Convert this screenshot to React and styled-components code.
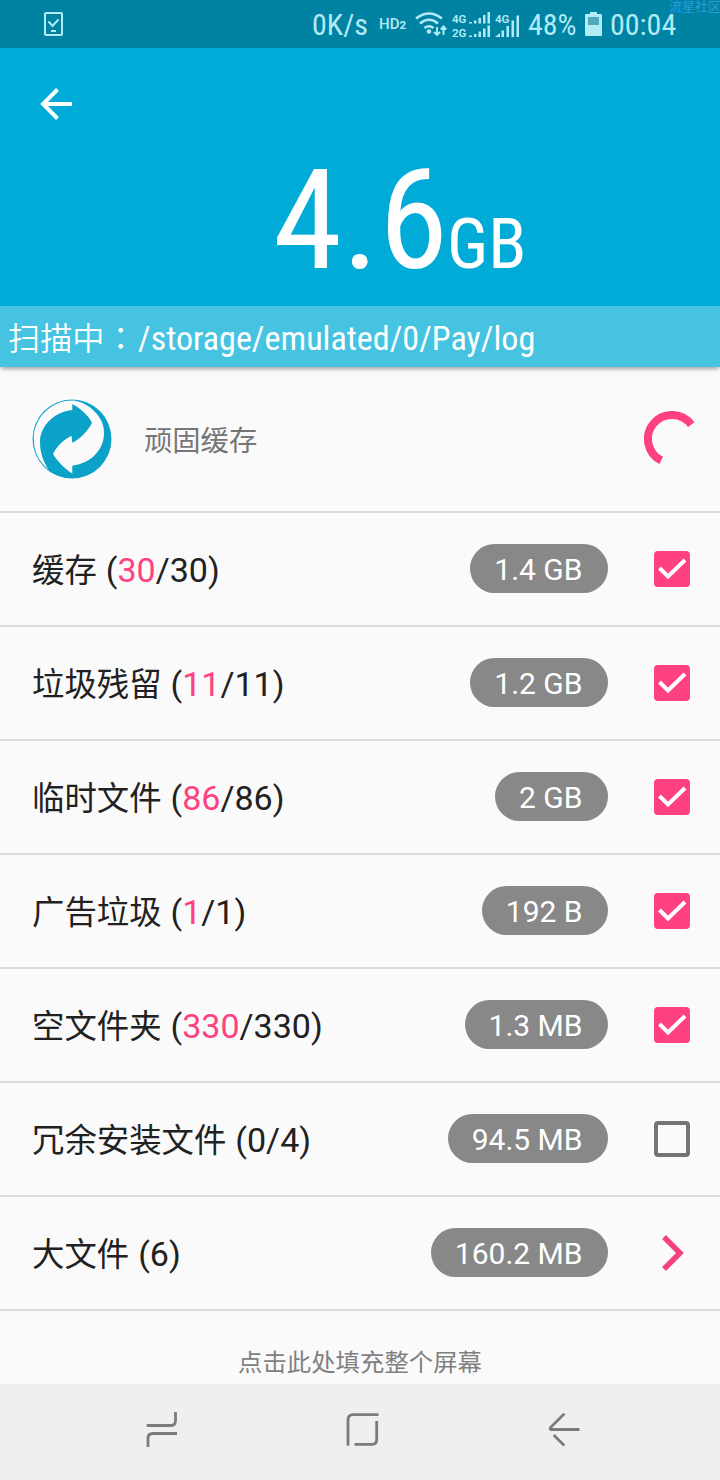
import React from "react";
import styled, { createGlobalStyle } from "styled-components";

const GlobalStyle = createGlobalStyle`
  * {
    box-sizing: border-box;
  }

  body {
    margin: 0;
    background-color: #fafafa;
    font-family: Roboto, "Noto Sans CJK SC", sans-serif;
  }
`;

const Screen = styled.div`
  position: relative;
  display: flex;
  flex-direction: column;
  width: 720px;
  height: 1480px;
  overflow: hidden;
  background-color: #fafafa;
`;

const Condensed = styled.span`
  display: block;
  flex: none;
  width: ${(props) => props.$width}px;
  font-family: "Roboto Condensed", Roboto, sans-serif;
  font-size: ${(props) => props.$size}px;
  line-height: 1;
  white-space: nowrap;
  font-stretch: 75%;
`;

const StatusBar = styled.header`
  display: flex;
  align-items: center;
  flex: none;
  height: 48px;
  padding-left: 43px;
  background-color: #0083a3;
  color: #b2ebf5;
`;

const StatusIcons = styled.div`
  display: flex;
  align-items: center;
  margin-left: 248px;
  padding-top: 2px;
`;

const HdLabel = styled.span`
  width: 36px;
  margin: -2px 0 0 10px;
  font-size: 15px;
  font-weight: 500;
  line-height: 1;
  white-space: nowrap;

  small {
    font-size: 11.5px;
    font-weight: 700;
  }
`;

const Watermark = styled.span`
  position: absolute;
  top: -1px;
  left: 669px;
  color: #2b9be0;
  font-size: 13px;
  line-height: 15px;
  white-space: nowrap;
`;

const Header = styled.section`
  display: flex;
  flex-direction: column;
  flex: none;
  height: 258px;
  background-color: #00abd8;
  color: #fff;
`;

const BackButton = styled.button`
  display: flex;
  width: 32px;
  height: 32px;
  margin: 40px 0 0 40px;
  padding: 0;
  border: none;
  background: none;
  color: inherit;
`;

const Total = styled.div`
  display: flex;
  align-items: baseline;
  margin: 30px 0 0 273px;
`;

const PathBar = styled.div`
  display: flex;
  align-items: center;
  flex: none;
  height: 61px;
  padding: 4px 0 0 8px;
  background-color: #45c3e0;
  color: #fff;
  font-size: 32.2px;
  box-shadow: 0 3px 4px -1px rgba(0, 0, 0, 0.35);
  z-index: 1;
`;

const PathLabel = styled.span`
  width: 130px;
  padding-bottom: 4px;
  font-family: "Noto Sans CJK SC", sans-serif;
  font-weight: 350;
  line-height: 1;
  white-space: nowrap;
`;

const Colon = styled.span`
  font-family: "Noto Sans CJK TC", sans-serif;
`;

const ScanRow = styled.div`
  display: flex;
  align-items: center;
  flex: none;
  height: 146px;
  padding: 0 20px 0 32px;
  border-bottom: 2px solid #dadada;
`;

const ScanLabel = styled.span`
  flex: 1;
  margin-left: 32px;
  padding-top: 6px;
  color: #757575;
  font-size: 28.3px;
  line-height: 1;
`;

const Row = styled.div`
  display: flex;
  align-items: center;
  flex: none;
  height: 114px;
  padding: 0 30px 0 32px;
  border-bottom: 2px solid #dadada;
`;

const RowTitle = styled.span`
  flex: 1;
  display: flex;
  align-items: baseline;
  padding-top: 2px;
  color: #212121;
  font-size: 32.4px;
  line-height: 1;
`;

const Count = styled.span`
  margin-left: 9px;
  font-size: 34px;

  em {
    color: #ff4081;
    font-style: normal;
  }
`;

const Size = styled.span`
  height: 49px;
  margin: -1px 46.5px 0 0;
  padding: 1px 25px 0 24px;
  border-radius: 25px;
  background-color: #888;
  color: #fff;
  font-size: 30px;
  line-height: 49px;
`;

const Control = styled.span`
  display: flex;
  justify-content: center;
  width: 36px;
`;

const Fill = styled.div`
  flex: 1;
  padding-top: 40px;
  color: #808080;
  font-size: 24.4px;
  line-height: 1;
  text-align: center;
`;

const NavBar = styled.nav`
  display: flex;
  justify-content: space-between;
  align-items: center;
  flex: none;
  height: 96px;
  padding: 0 138px 4px 144px;
  background-color: #efefef;
`;

const NotificationIcon = () => (
  <svg width="21" height="26" viewBox="0 0 21 26" fill="none" stroke="currentColor" strokeWidth="2">
    <rect x="2" y="2" width="17" height="22" rx="1" />
    <path d="M5.500 10.500l4 4.500 6-6.500M8 20h5" />
  </svg>
);

const WifiIcon = () => (
  <svg width="33" height="26" viewBox="0 0 33 26" fill="none" stroke="currentColor" strokeWidth="2.6">
    <path d="M1 6.5Q14 -3.500 27 6.500M5 11.500Q14 4 23 11.500M9.500 16Q14 12.500 18.500 16" />
    <circle cx="14" cy="19.500" r="2.200" fill="currentColor" stroke="none" />
    <path d="M22 15v8M19 20l3 3 3-3M28.500 23v-8M25.800 17.500l2.700-3 2.700 3" strokeWidth="1.900" />
  </svg>
);

const SignalSvg = styled.svg`
  flex: none;
  margin: -1px ${(props) => props.$right}px 0 ${(props) => props.$left}px;
  overflow: visible;
  fill: currentColor;
`;

const SignalText = styled.text`
  font-family: Roboto, sans-serif;
  font-size: 11.5px;
  font-weight: 600;
`;

const DualSignalIcon = () => (
  <SignalSvg $left={4} $right={5} width="38" height="26" viewBox="0 0 38 26">
    <SignalText x="0" y="10.5">4G</SignalText>
    <SignalText x="0" y="24.5">2G</SignalText>
    <path d="M17 10h3v1.500h-3zM22 8.500h2.500v3H22zM26.500 6H29v5.500h-2.500zM31 3h2.500v8.500H31zM35.500 0H38v11.500h-2.500z" />
    <path d="M17 23.500h3V25h-3zM22 22h2.500v3H22zM26.500 19.500H29V25h-2.500zM31 16.500h2.500V25H31zM35.500 13.500H38V25h-2.500z" />
  </SignalSvg>
);

const SignalIcon = () => (
  <SignalSvg $left={0} $right={8} width="25" height="26" viewBox="0 0 25 26">
    <SignalText x="0" y="10.5">4G</SignalText>
    <path d="M0 25l5-4v4zM6.500 18.500H9V25H6.500zM11.500 14H14v11h-2.500zM16.500 8.500H19V25h-2.500zM21.500 3.500H24V25h-2.500z" />
  </SignalSvg>
);

const BatterySvg = styled.svg`
  flex: none;
  margin: -2px 8px 0 7px;
`;

const BatteryIcon = () => (
  <BatterySvg width="17" height="24" viewBox="0 0 17 24" fill="currentColor">
    <path d="M5 0h7v2h4a1 1 0 0 1 1 1v20a1 1 0 0 1-1 1H1a1 1 0 0 1-1-1V3a1 1 0 0 1 1-1h4z" />
    <path d="M3 5h11v8H3z" fill="#4fa9bd" />
  </BatterySvg>
);

const BackIcon = () => (
  <svg width="32" height="32" viewBox="0 0 32 32" fill="none" stroke="currentColor" strokeWidth="4">
    <path d="M32 16H3M17.500 1.500L3 16l14.500 14.500" />
  </svg>
);

const RecycleIcon = () => (
  <svg width="80" height="80" viewBox="0 0 80 80">
    <circle cx="40" cy="40" r="39.500" fill="#0aa2c9" />
    <path
      fill="#fafafa"
      d="M16.500 70.500C7 63 1.700 52 1.700 40C1.700 19 19 1.500 40 1.500C48 2 57 6 63 13C69 19 72 26 72 34C72 50 60 64 40.300 66.700V74.500C33 70 25 62 21 55C25 47 32 40 39.500 36.700L40.300 43.700C48 40 56 32 60 23.700C56 16 48 9 40.300 5V11C22 13 8 27 8 43C8 55 12 63 16.500 70.500z"
    />
  </svg>
);

const Spinner = () => (
  <svg width="56" height="56" viewBox="0 0 56 56" fill="none" stroke="#ff4081" strokeWidth="8">
    <path d="M17.200 49.400A24 24 0 1 1 47.200 13.600" />
  </svg>
);

const Checkbox = ({ checked }) => (
  <svg width="36" height="36" viewBox="0 0 36 36" fill="none">
    {checked ? (
      <>
        <rect width="36" height="36" rx="4" fill="#ff4081" />
        <path d="M5.500 17l8.500 8.500L31 9" stroke="#fff" strokeWidth="4" />
      </>
    ) : (
      <rect x="2" y="2" width="32" height="32" rx="2" stroke="#757575" strokeWidth="4" />
    )}
  </svg>
);

const Chevron = () => (
  <svg width="24" height="36" viewBox="0 0 24 36" fill="none" stroke="#f34182" strokeWidth="5.500">
    <path d="M4 2l16 16L4 34" />
  </svg>
);

const NavIcon = styled.svg.attrs({ width: 36, height: 36, viewBox: "0 0 36 36" })`
  fill: none;
  stroke: #7b7b7b;
  stroke-width: 2.8;
`;

const items = [
  { name: "缓存", selected: 30, total: 30, size: "1.4 GB" },
  { name: "垃圾残留", selected: 11, total: 11, size: "1.2 GB" },
  { name: "临时文件", selected: 86, total: 86, size: "2 GB" },
  { name: "广告垃圾", selected: 1, total: 1, size: "192 B" },
  { name: "空文件夹", selected: 330, total: 330, size: "1.3 MB" },
  { name: "冗余安装文件", selected: 0, total: 4, size: "94.5 MB" },
  { name: "大文件", total: 6, size: "160.2 MB" },
];

function JunkRow({ name, selected, total, size }) {
  const expandable = selected === undefined;

  return (
    <Row>
      <RowTitle>
        {name}
        <Count>
          ({selected > 0 ? <em>{selected}</em> : selected}
          {!expandable && "/"}
          {total})
        </Count>
      </RowTitle>
      <Size>{size}</Size>
      <Control>{expandable ? <Chevron /> : <Checkbox checked={selected > 0} />}</Control>
    </Row>
  );
}

export default function App() {
  return (
    <Screen>
      <GlobalStyle />
      <StatusBar>
        <NotificationIcon />
        <StatusIcons>
          <Condensed $size={30} $width={57}>0K/s</Condensed>
          <HdLabel>
            HD<small>2</small>
          </HdLabel>
          <WifiIcon />
          <DualSignalIcon />
          <SignalIcon />
          <Condensed $size={30} $width={50}>48%</Condensed>
          <BatteryIcon />
          <Condensed $size={30} $width={68}>00:04</Condensed>
        </StatusIcons>
        <Watermark>流星社区</Watermark>
      </StatusBar>
      <Header>
        <BackButton>
          <BackIcon />
        </BackButton>
        <Total>
          <Condensed $size={140} $width={174}>4.6</Condensed>
          <Condensed $size={70} $width={80}>GB</Condensed>
        </Total>
      </Header>
      <PathBar>
        <PathLabel>
          扫描中<Colon lang="zh-TW">：</Colon>
        </PathLabel>
        <Condensed $size={34.1} $width={400}>/storage/emulated/0/Pay/log</Condensed>
      </PathBar>
      <ScanRow>
        <RecycleIcon />
        <ScanLabel>顽固缓存</ScanLabel>
        <Spinner />
      </ScanRow>
      {items.map((item) => (
        <JunkRow key={item.name} {...item} />
      ))}
      <Fill>点击此处填充整个屏幕</Fill>
      <NavBar>
        <NavIcon>
          <path d="M2.700 13.500H27q4.500 0 4.500-5V0M33 21.500H9q-5 0-5 5V35" />
        </NavIcon>
        <NavIcon>
          <path d="M33.500 2.700H8q-5 0-5 5v26M31.700 9v18.500q0 4.800-4.800 4.800H9.500" />
        </NavIcon>
        <NavIcon>
          <path d="M18.300 1.700L4.500 15.500q-1 2 1 2H33.500M7.700 23l10.500 10.500" />
        </NavIcon>
      </NavBar>
    </Screen>
  );
}
